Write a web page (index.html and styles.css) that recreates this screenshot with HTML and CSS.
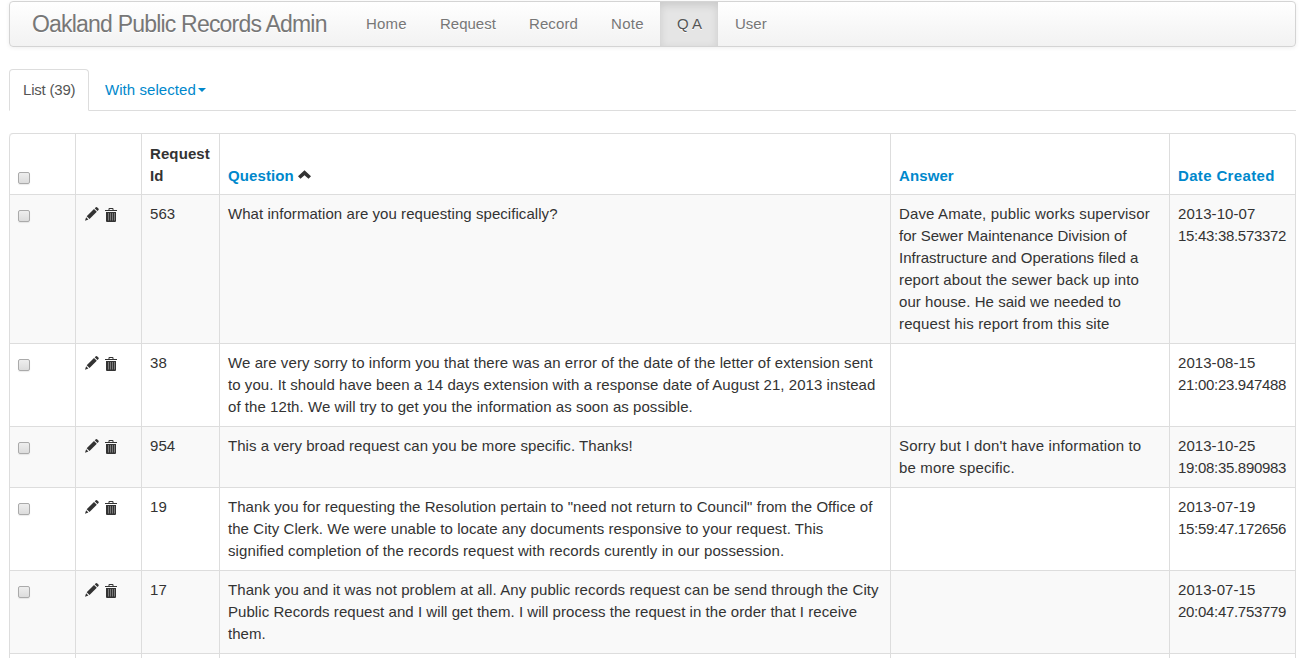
FILE: index.html
```html
<!DOCTYPE html>
<html lang="en">
<head>
<meta charset="utf-8">
<title>Q A - Oakland Public Records Admin</title>
<link rel="stylesheet" href="styles.css">
</head>
<body>
<svg class="sprites" width="0" height="0" aria-hidden="true">
  <symbol id="pencil" viewBox="0 0 14 14"><path d="M0 13.800l1.100-3.500 2.300 2.300zM1.700 9.300L9 2l2.800 2.800L4.500 12zM9.700 1.300L10.900.3q.7-.6 1.400.1l1.100 1.100q.7.700.1 1.400L12.400 4z"/></symbol>
  <symbol id="trash" viewBox="0 0 12 14"><path d="M0 2h3.500V.9Q3.500 0 4.400 0h3.200q.9 0 .9.900V2H12v1H0zM4.500 1v1h3V1zM1 4h10v9q0 1-1 1H2q-1 0-1-1z" fill-rule="evenodd"/><path class="slats" d="M3.500 5v7.500M5.500 5v7.500M7.500 5v7.500M9.500 5v7.500"/></symbol>
</svg>
<nav class="navbar">
  <a class="brand">Oakland Public Records Admin</a>
  <a class="nav-link home">Home</a>
  <a class="nav-link request">Request</a>
  <a class="nav-link record">Record</a>
  <a class="nav-link note">Note</a>
  <a class="nav-link qa active">Q A</a>
  <a class="nav-link user">User</a>
</nav>
<div class="tabs">
  <a class="tab current"><span>List (39)</span></a>
  <a class="tab menu"><span>With selected</span><i class="caret"></i></a>
</div>
<table class="records">
  <colgroup><col class="c-check"><col class="c-tools"><col class="c-id"><col class="c-question"><col class="c-answer"><col class="c-date"></colgroup>
  <thead>
    <tr>
      <th><i class="check"></i></th>
      <th></th>
      <th>Request<br>Id</th>
      <th><a>Question</a> <svg class="chevron" viewBox="0 0 12 8"><path d="M6 0l6 5.500L9.700 8 6 4.700 2.300 8 0 5.500z"/></svg></th>
      <th><a>Answer</a></th>
      <th class="created"><a>Date Created</a></th>
    </tr>
  </thead>
  <tbody>
    <tr>
      <td><i class="check"></i></td>
      <td><div class="tools"><svg class="pencil"><use href="#pencil"/></svg><svg class="trash"><use href="#trash"/></svg></div></td>
      <td>563</td>
      <td>What information are you requesting specifically?</td>
      <td><span class="loose">Dave Amate, public works supervisor</span><br><span class="plain">for Sewer Maintenance Division of<br>Infrastructure and Operations filed a</span><br><span class="loose">report about the sewer back up into</span><br>our house. He said we needed to<br><span class="loose">request his report from this site</span></td>
      <td>2013-10-07<br><span class="time">15:43:38.573372</span></td>
    </tr>
    <tr>
      <td><i class="check"></i></td>
      <td><div class="tools"><svg class="pencil"><use href="#pencil"/></svg><svg class="trash"><use href="#trash"/></svg></div></td>
      <td>38</td>
      <td><span class="wide">We are very sorry to inform you that there was an error of the date of the letter of extension sent</span><br>to you. It should have been a 14 days extension with a response date of August 21, 2013 instead<br>of the 12th. We will try to get you the information as soon as possible.</td>
      <td></td>
      <td>2013-08-15<br><span class="time">21:00:23.947488</span></td>
    </tr>
    <tr>
      <td><i class="check"></i></td>
      <td><div class="tools"><svg class="pencil"><use href="#pencil"/></svg><svg class="trash"><use href="#trash"/></svg></div></td>
      <td>954</td>
      <td>This a very broad request can you be more specific. Thanks!</td>
      <td class="loose">Sorry but I don't have information to<br>be more specific.</td>
      <td>2013-10-25<br><span class="time">19:08:35.890983</span></td>
    </tr>
    <tr>
      <td><i class="check"></i></td>
      <td><div class="tools"><svg class="pencil"><use href="#pencil"/></svg><svg class="trash"><use href="#trash"/></svg></div></td>
      <td>19</td>
      <td>Thank you for requesting the Resolution pertain to "need not return to Council" from the Office of<br>the City Clerk. We were unable to locate any documents responsive to your request. This<br><span class="wide">signified completion of the records request with records curently in our possession.</span></td>
      <td></td>
      <td>2013-07-19<br><span class="time">15:59:47.172656</span></td>
    </tr>
    <tr>
      <td><i class="check"></i></td>
      <td><div class="tools"><svg class="pencil"><use href="#pencil"/></svg><svg class="trash"><use href="#trash"/></svg></div></td>
      <td>17</td>
      <td><span class="wide">Thank you and it was not problem at all. Any public records request can be send through the City</span><br>Public Records request and I will get them. I will process the request in the order that I receive<br>them.</td>
      <td></td>
      <td>2013-07-15<br><span class="time">20:04:47.753779</span></td>
    </tr>
    <tr class="next"><td></td><td></td><td></td><td></td><td></td><td></td></tr>
  </tbody>
</table>
</body>
</html>
```
FILE: styles.css
```css
* { box-sizing: border-box; }
html { height: 658px; overflow: hidden; background: #fff; }
body {
  height: 658px;
  margin: 0;
  padding: 1px 19px 0 9px;
  overflow: hidden;
  color: #333;
  font: 15px/22px "Liberation Sans", Arial, sans-serif;
}
.sprites { position: absolute; }
a { color: #0088cc; text-decoration: none; }

.navbar {
  display: flex;
  height: 46px;
  padding-left: 22px;
  border: 1px solid #d4d4d4;
  border-radius: 4px;
  background: linear-gradient(#fff, #f2f2f2);
  box-shadow: 0 1px 4px rgba(0, 0, 0, .065);
  line-height: 44px;
  white-space: nowrap;
}
.navbar a { color: #777; text-shadow: 0 1px 0 #fff; }
.navbar .brand { width: 318px; font-size: 23px; letter-spacing: -.8px; }
.nav-link { padding-left: 16px; }
.home { width: 74px; letter-spacing: .2px; }
.request { width: 89px; }
.record { width: 82px; letter-spacing: .1px; }
.note { width: 65px; letter-spacing: .3px; }
.qa { width: 58px; }
.navbar .active {
  padding-left: 17px;
  color: #555;
  background: #e5e5e5;
  box-shadow: inset 0 3px 8px rgba(0, 0, 0, .125);
}
.user { padding-left: 17px; }

.tabs {
  display: flex;
  height: 42px;
  margin: 22px 0;
  border-bottom: 1px solid #ddd;
  white-space: nowrap;
}
.tab { display: flex; align-items: center; height: 42px; }
.current {
  width: 80px;
  padding-left: 13px;
  border: 1px solid #ddd;
  border-bottom-color: #fff;
  border-radius: 4px 4px 0 0;
  background: #fff;
  color: #555;
  letter-spacing: -.2px;
}
.menu { padding-left: 16px; letter-spacing: .06px; }
.caret {
  margin-left: 2px;
  border: 4px solid transparent;
  border-top-color: #0088cc;
  border-bottom: 0;
}

.records {
  width: 1287px;
  table-layout: fixed;
  border: 1px solid #ddd;
  border-width: 1px 1px 0 0;
  border-radius: 4px 4px 0 0;
  border-spacing: 0;
}
.c-check, .c-tools { width: 66px; }
.c-id { width: 78px; }
.c-question { width: 671px; }
.c-answer { width: 279px; }
.c-date { width: 126px; }
th, td {
  padding: 8px 0 8px 8px;
  border-left: 1px solid #ddd;
  text-align: left;
  white-space: nowrap;
}
td { vertical-align: top; border-top: 1px solid #ddd; letter-spacing: .055px; }
th { padding: 9px 0 7px 8px; vertical-align: bottom; letter-spacing: .1px; }
th:first-child { border-top-left-radius: 4px; }
tbody tr:nth-child(odd) td { background: #f9f9f9; }
tbody .next:nth-child(n) td { height: 30px; background: #fff; }
.plain { letter-spacing: 0; }
.wide { letter-spacing: .09px; }
.loose { letter-spacing: .14px; }
.time { letter-spacing: -.3px; }
.created { letter-spacing: .35px; }

.check {
  display: block;
  width: 12px;
  height: 12px;
  margin: 7px 0 3px;
  border: 1px solid #aaa;
  border-radius: 2px;
  background: linear-gradient(#eee, #dcdcdc);
  box-shadow: 0 1px 1px rgba(0, 0, 0, .08);
}
.tools { display: flex; gap: 6px; padding-left: 1px; }
.pencil { width: 14px; height: 14px; margin-top: 4px; fill: #333; }
.trash { width: 12px; height: 14px; margin-top: 5px; fill: #333; }
.slats { fill: none; stroke: #999; stroke-width: .7; }
.chevron { width: 13px; height: 9px; fill: #333; vertical-align: 2px; }
```
